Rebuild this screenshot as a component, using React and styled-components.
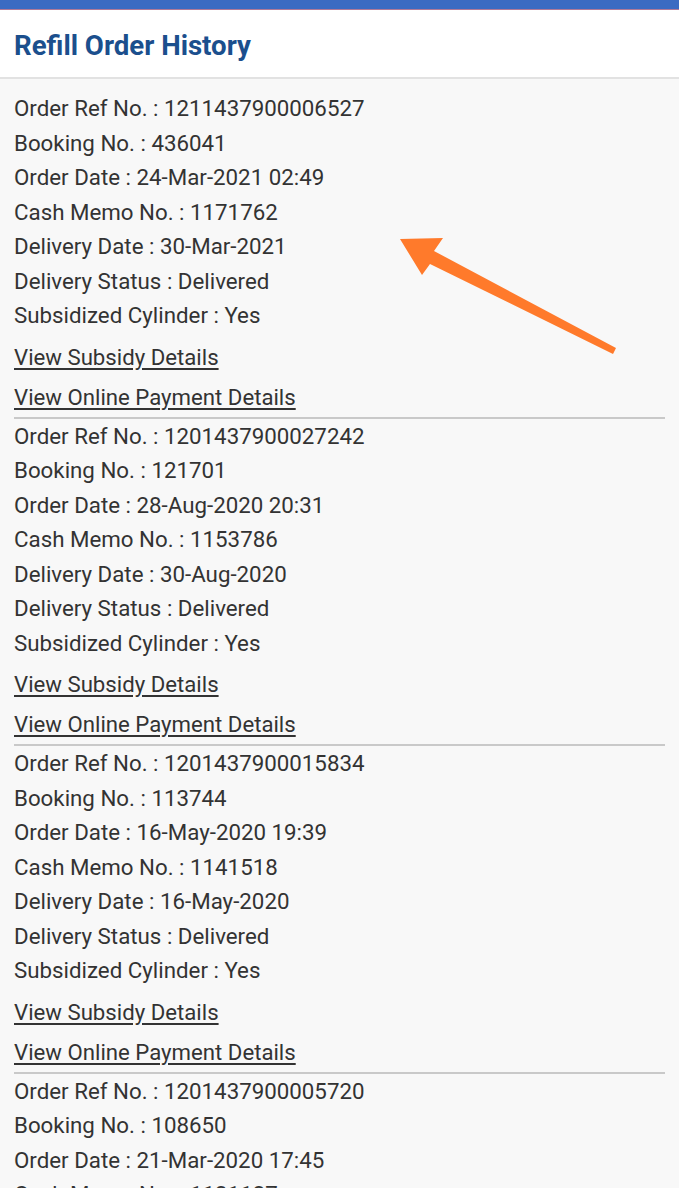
import React from 'react'
import styled, { createGlobalStyle } from 'styled-components'

const GlobalStyle = createGlobalStyle`
  body {
    margin: 0;
    background: #ffffff;
    font-family: Roboto, "Noto Sans", Arial, sans-serif;
  }
`

const Page = styled.div`
  width: 679px;
  height: 1200px;
  overflow: hidden;
  background: #ffffff;
  position: relative;
`

const TopBar = styled.div`
  height: 9px;
  background: #3b6bc2;
  border-bottom: 1px solid #b07a98;
`

const Header = styled.header`
  height: 69px;
  display: flex;
  align-items: center;
  padding: 3px 14px 0;
  box-sizing: border-box;
  background: #ffffff;
  border-bottom: 2px solid #e2e2e2;
`

const Title = styled.h1`
  margin: 0;
  font-size: 27.6px;
  font-weight: 700;
  color: #1b4f8d;
  letter-spacing: 0;
`

const List = styled.main`
  height: 1109px;
  overflow: hidden;
  background: #f8f8f8;
  padding: 12px 14px 0;
  box-sizing: border-box;
`

const Order = styled.section`
  border-bottom: 2px solid #c9c9c9;
`

const Row = styled.div`
  height: 34.5px;
  line-height: 34.5px;
  font-size: 22.3px;
  color: #333333;
  white-space: nowrap;
`

const Links = styled.div`
  padding-top: 4px;
  display: flex;
  flex-direction: column;
  align-items: flex-start;
`

const LinkText = styled.a`
  display: block;
  height: 40px;
  line-height: 40px;
  font-size: 22.2px;
  color: #333333;
  text-decoration: underline;
  text-underline-offset: 3px;
  cursor: pointer;
`

const Arrow = styled.svg`
  position: absolute;
  left: 390px;
  top: 228px;
`

const orders = [
  {
    ref: '1211437900006527',
    booking: '436041',
    date: '24-Mar-2021 02:49',
    memo: '1171762',
    delivery: '30-Mar-2021',
  },
  {
    ref: '1201437900027242',
    booking: '121701',
    date: '28-Aug-2020 20:31',
    memo: '1153786',
    delivery: '30-Aug-2020',
  },
  {
    ref: '1201437900015834',
    booking: '113744',
    date: '16-May-2020 19:39',
    memo: '1141518',
    delivery: '16-May-2020',
  },
  {
    ref: '1201437900005720',
    booking: '108650',
    date: '21-Mar-2020 17:45',
    memo: '1131137',
    delivery: '23-Mar-2020',
  },
]

const App = () => {
  return (
    <Page>
      <GlobalStyle />
      <TopBar />
      <Header>
        <Title>Refill Order History</Title>
      </Header>
      <List>
        {orders.map((o) => (
          <Order key={o.ref}>
            <Row>Order Ref No. : {o.ref}</Row>
            <Row>Booking No. : {o.booking}</Row>
            <Row>Order Date : {o.date}</Row>
            <Row>Cash Memo No. : {o.memo}</Row>
            <Row>Delivery Date : {o.delivery}</Row>
            <Row>Delivery Status : Delivered</Row>
            <Row>Subsidized Cylinder : Yes</Row>
            <Links>
              <LinkText>View Subsidy Details</LinkText>
              <LinkText>View Online Payment Details</LinkText>
            </Links>
          </Order>
        ))}
      </List>
      {/* orange pointer drawn over the first order */}
      <Arrow width="240" height="140" viewBox="0 0 240 140">
        <polygon
          points="10,11 53,10 44,23 226,120 223,126 40,36 32,47"
          fill="#ff7a2b"
        />
      </Arrow>
    </Page>
  )
}

export default App
